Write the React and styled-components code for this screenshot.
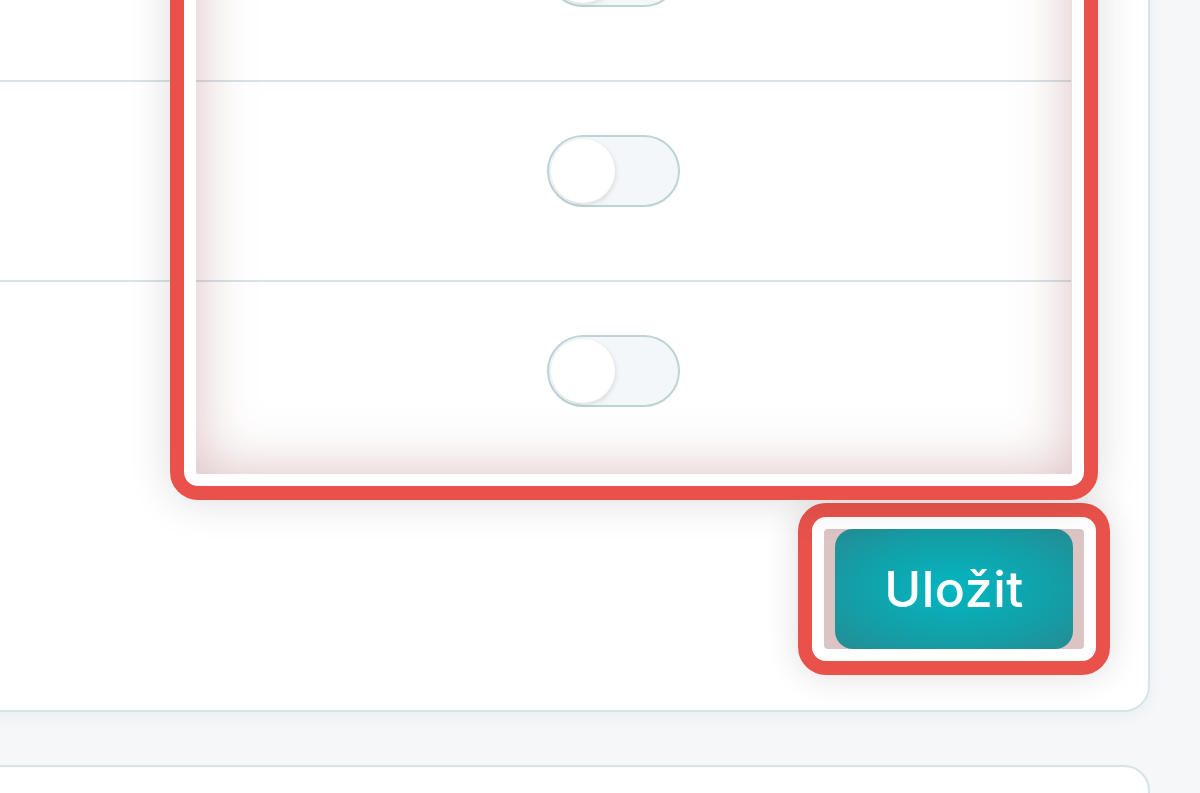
import React from 'react';
import styled, { createGlobalStyle } from 'styled-components';

const GlobalStyle = createGlobalStyle`
  html, body {
    margin: 0;
    padding: 0;
    background: #f5f7f9;
    font-family: Inter, "Noto Sans", "Liberation Sans", sans-serif;
  }
  * { box-sizing: border-box; }
`;

const Page = styled.div`
  width: 1200px;
  height: 793px;
  overflow: hidden;
  background: #f5f7f9;
`;

const Card = styled.section`
  width: 1190px;
  margin: -120px 0 0 -40px;
  background: #fff;
  border: 2px solid #d6e4e6;
  border-radius: 26px;
  padding: 0 0 35px 0;
  box-shadow: 0 4px 14px rgba(120, 150, 155, 0.08);
`;

const NextCard = styled.section`
  width: 1190px;
  height: 220px;
  margin: 53px 0 0 -40px;
  background: #fff;
  border: 2px solid #d6e4e6;
  border-radius: 26px;
`;

const Table = styled.div`
  position: relative;
  width: 1109px;
`;

const Row = styled.div`
  display: grid;
  grid-template-columns: 194px 1fr;
  height: ${(p) => (p.$last ? '198px' : '200px')};
  border-bottom: ${(p) => (p.$last ? 'none' : '2px solid #d7e3e5')};
`;

const LabelCell = styled.div``;

const ToggleCell = styled.div`
  display: flex;
  justify-content: center;
  align-items: flex-start;
  padding-top: 53px;
`;

const Toggle = styled.button`
  width: 133px;
  height: 72px;
  padding: 0 2px;
  display: flex;
  align-items: center;
  border: 2px solid #bdd3d5;
  border-radius: 36px;
  background: #f4f7f9;
  cursor: pointer;
`;

const Knob = styled.span`
  width: 64px;
  height: 64px;
  border-radius: 50%;
  background: #fff;
  box-shadow: 1px 2px 4px rgba(90, 110, 115, 0.18);
`;

/* zvýraznění sloupce s přepínači */
const ColumnHighlight = styled.div`
  position: absolute;
  left: 208px;
  top: -100px;
  width: 928px;
  height: 718px;
  border: 14px solid #e8524a;
  border-radius: 28px;
  box-shadow:
    0 0 40px rgba(60, 40, 40, 0.17),
    inset 0 0 0 12px #fff,
    inset 0 0 56px 14px rgba(160, 90, 92, 0.36);
  pointer-events: none;
  z-index: 2;
`;

const Actions = styled.div`
  display: flex;
  justify-content: flex-end;
  margin-top: 23px;
  padding-right: 38px;
`;

const ButtonRing = styled.div`
  border: 14px solid #e8524a;
  border-radius: 28px;
  background: #fff;
  padding: 12px;
  box-shadow: 0 0 32px rgba(60, 40, 40, 0.16);
`;

const ButtonInner = styled.div`
  display: flex;
  padding: 0 11px;
  border-radius: 4px;
  background: #dcc4c4;
`;

const SaveButton = styled.button`
  width: 238px;
  height: 120px;
  border: none;
  border-radius: 18px;
  background: radial-gradient(ellipse at center, #04b6c1 0%, #12a0a9 58%, #258c93 100%);
  color: #fff;
  font-family: Inter, "Noto Sans", "Liberation Sans", sans-serif;
  font-size: 50px;
  font-weight: 500;
  letter-spacing: 0.5px;
  cursor: pointer;
`;

const rows = [0, 1, 2];

export default function App() {
  return (
    <Page>
      <GlobalStyle />
      <Card>
        <Table>
          {rows.map((r) => (
            <Row key={r} $last={r === rows.length - 1}>
              <LabelCell />
              <ToggleCell>
                <Toggle type="button" aria-pressed="false">
                  <Knob />
                </Toggle>
              </ToggleCell>
            </Row>
          ))}
          <ColumnHighlight />
        </Table>
        <Actions>
          <ButtonRing>
            <ButtonInner>
              <SaveButton type="button">Uložit</SaveButton>
            </ButtonInner>
          </ButtonRing>
        </Actions>
      </Card>
      <NextCard />
    </Page>
  );
}
